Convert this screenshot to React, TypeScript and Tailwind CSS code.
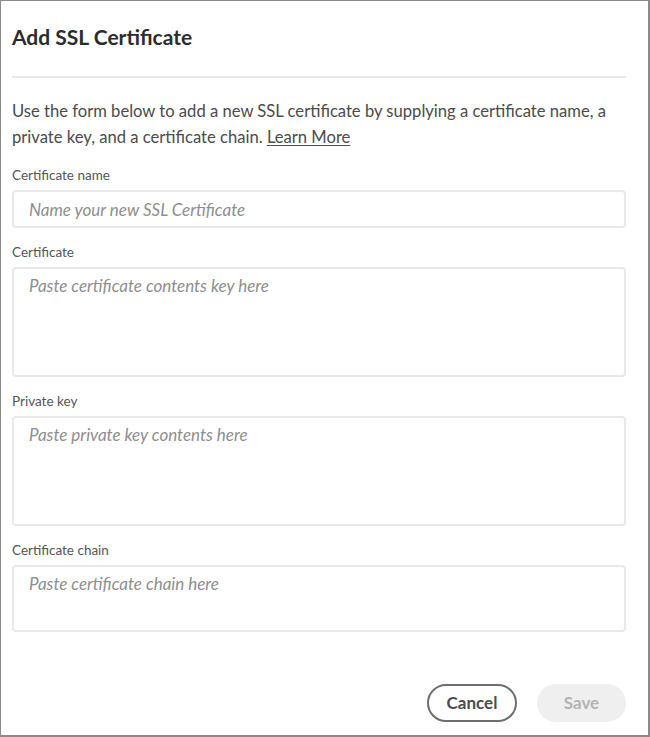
// SSL証明書追加フォーム

const fieldClass =
  "block w-full rounded-[4px] border-2 border-[#e9e9e9] bg-white px-[15px] text-[17px] text-[#2c2c2c] placeholder:italic placeholder:text-[#8e8e8e] outline-none";

function Field({
  label,
  placeholder,
  rows,
}: {
  label: string;
  placeholder: string;
  rows?: string;
}) {
  return (
    <div className="flex flex-col">
      <label className="mb-[7px] text-[13.5px] leading-[16px] text-[#555555]">
        {label}
      </label>
      {rows ? (
        <textarea
          placeholder={placeholder}
          className={`${fieldClass} resize-none pt-[4px] leading-[26px] ${rows}`}
        />
      ) : (
        <input
          type="text"
          placeholder={placeholder}
          className={`${fieldClass} h-[38px]`}
        />
      )}
    </div>
  );
}

export default function App() {
  return (
    <div
      className="box-border flex h-[737px] w-[650px] flex-col border-t border-l border-r-2 border-b-2 border-[#8a8a8a] bg-white pl-[11px] pr-[22px]"
      style={{ fontFamily: "Lato, 'Liberation Sans', sans-serif" }}
    >
      {/* ヘッダー */}
      <h1 className="pt-[22px] text-[21px] font-bold leading-[28px] text-[#2c2c2c]">
        Add SSL Certificate
      </h1>
      <div className="mt-[25px] h-[2px] bg-[#e8e8e8]" />

      {/* 説明文 */}
      <p className="mt-[20px] text-[16.6px] leading-[26px] text-[#4b4b4b]">
        Use the form below to add a new SSL certificate by supplying a
        certificate name, a private key, and a certificate chain.{" "}
        <a href="#" className="underline underline-offset-2">
          Learn More
        </a>
      </p>

      {/* フォーム */}
      <div className="mt-[17px] flex flex-col gap-[16px]">
        <Field label="Certificate name" placeholder="Name your new SSL Certificate" />
        <Field
          label="Certificate"
          placeholder="Paste certificate contents key here"
          rows="h-[110px]"
        />
        <Field
          label="Private key"
          placeholder="Paste private key contents here"
          rows="h-[110px]"
        />
        <Field
          label="Certificate chain"
          placeholder="Paste certificate chain here"
          rows="h-[67px]"
        />
      </div>

      {/* フッター */}
      <div className="mt-auto mb-[13px] flex justify-end gap-[20px]">
        <button className="h-[38px] w-[90px] rounded-full border-2 border-[#6e6e6e] text-[17px] font-bold text-[#4b4b4b]">
          Cancel
        </button>
        <button
          disabled
          className="h-[38px] w-[89px] rounded-full bg-[#efefef] text-[17px] font-bold text-[#b3b3b3]"
        >
          Save
        </button>
      </div>
    </div>
  );
}
